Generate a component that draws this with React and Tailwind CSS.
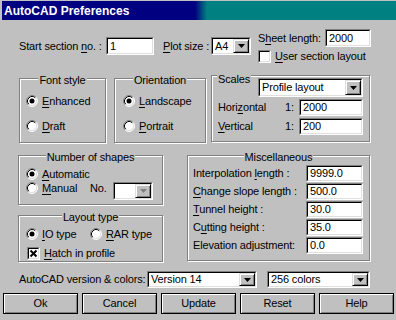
import React from "react";

const FONT = "font-['Liberation_Sans',Arial,sans-serif]";

// underlined mnemonic letter
function U({ children }) {
  return <span className="underline underline-offset-[2px]">{children}</span>;
}

function Sunken({ className = "", children }) {
  return (
    <div className={"flex border border-t-[#808080] border-l-[#808080] border-r-white border-b-white " + className}>
      <div className="flex flex-1 items-stretch border border-t-black border-l-black border-r-[#dfdfdf] border-b-[#dfdfdf] bg-white">
        {children}
      </div>
    </div>
  );
}

function Arrow({ disabled }) {
  return (
    <div className="flex w-[16px] items-center justify-center border border-t-[#dfdfdf] border-l-[#dfdfdf] border-r-black border-b-black bg-[#c0c0c0] shadow-[inset_1px_1px_0_#fff,inset_-1px_-1px_0_#808080]">
      <svg width="7" height="4" viewBox="0 0 7 4">
        <path d="M0 0H7L3.5 4Z" fill={disabled ? "#808080" : "#000"} />
      </svg>
    </div>
  );
}

function Field({ className, value }) {
  return (
    <Sunken className={className}>
      <span className="flex items-center pl-[2px] leading-none">{value}</span>
    </Sunken>
  );
}

function Combo({ className, value, disabled }) {
  return (
    <Sunken className={className}>
      <span className="flex flex-1 items-center pl-[2px] leading-none">{value}</span>
      <Arrow disabled={disabled} />
    </Sunken>
  );
}

function Radio({ checked }) {
  return (
    <svg width="12" height="12" viewBox="0 0 12 12" className="shrink-0">
      <circle cx="6" cy="6" r="5" fill="#fff" />
      <path d="M9.89 2.11A5.5 5.5 0 0 0 2.11 9.89" stroke="#808080" fill="none" />
      <path d="M2.11 9.89A5.5 5.5 0 0 0 9.89 2.11" stroke="#fff" fill="none" />
      <path d="M9.18 2.82A4.5 4.5 0 0 0 2.82 9.18" stroke="#000" fill="none" />
      <path d="M2.82 9.18A4.5 4.5 0 0 0 9.18 2.82" stroke="#dfdfdf" fill="none" />
      {checked && <circle cx="6" cy="6" r="2.5" fill="#000" />}
    </svg>
  );
}

function Check({ checked }) {
  return (
    <Sunken className="h-[13px] w-[13px] shrink-0">
      {checked && (
        <svg width="9" height="9" viewBox="0 0 9 9" className="m-auto">
          <path d="M1.5 1.5L7.5 7.5M7.5 1.5L1.5 7.5" stroke="#000" strokeWidth="2" />
        </svg>
      )}
    </Sunken>
  );
}

function Option({ checked, children, className = "" }) {
  return (
    <div className={"flex h-[14px] items-center gap-[4px] " + className}>
      <Radio checked={checked} />
      <span className="leading-none">{children}</span>
    </div>
  );
}

function Group({ title, className, children }) {
  return (
    <div className={"flex flex-col border border-[#808080] shadow-[inset_1px_1px_0_#fff,1px_1px_0_#fff] " + className}>
      <div className="flex justify-center">
        <span className="-mt-[5px] bg-[#c0c0c0] px-[1px] leading-[13px]">{title}</span>
      </div>
      {children}
    </div>
  );
}

function Button({ children }) {
  return (
    <div className="flex h-[21px] w-[75px] items-center justify-center border border-black bg-[#c0c0c0] shadow-[inset_1px_1px_0_#fff,inset_-1px_-1px_0_#808080]">
      {children}
    </div>
  );
}

const MISC = [
  [<>Interpolation <U>l</U>ength :</>, "9999.0"],
  [<><U>C</U>hange slope length :</>, "500.0"],
  [<><U>T</U>unnel height :</>, "30.0"],
  [<>C<U>u</U>tting height :</>, "35.0"],
  ["Elevation adjustment:", "0.0"],
];

export default function App() {
  return (
    <div className={"flex h-[320px] w-[396px] flex-col overflow-hidden whitespace-nowrap bg-[#c0c0c0] text-[11px] tracking-[-0.15px] text-black " + FONT}>
      {/* title bar */}
      <div className="ml-[2px] mt-[1px] flex h-[19px] items-center bg-[linear-gradient(to_right,#000080_49%,#008080_52%)] pl-[2px] text-[12px] font-bold tracking-normal text-white">
        AutoCAD Preferences
      </div>

      {/* top row */}
      <div className="mt-[9px] flex h-[34px] items-start">
        <div className="ml-[19px] mt-[8px] flex h-[18px] items-center">
          <span className="w-[87px]">Start section <U>n</U>o. :</span>
          <Field className="h-[18px] w-[48px]" value="1" />
          <span className="ml-[9px] w-[48px]"><U>P</U>lot size :</span>
          <Combo className="h-[18px] w-[40px]" value="A4" />
        </div>
        <div className="ml-[7px] flex flex-col">
          <div className="flex h-[18px] items-center">
            <span className="w-[67px]">S<U>h</U>eet length:</span>
            <Field className="h-[18px] w-[46px]" value="2000" />
          </div>
          <div className="mt-[2px] flex h-[14px] items-center gap-[4px]">
            <Check />
            <span><U>U</U>ser section layout</span>
          </div>
        </div>
      </div>

      {/* font style / orientation / scales */}
      <div className="mt-[12px] flex h-[67px] items-start">
        <Group title="Font style" className="ml-[19px] mt-[3px] h-[65px] w-[87px]">
          <Option checked className="ml-[6px] mt-[7px]"><U>E</U>nhanced</Option>
          <Option className="ml-[6px] mt-[11px]"><U>D</U>raft</Option>
        </Group>
        <Group title="Orientation" className="ml-[8px] mt-[3px] h-[65px] w-[92px]">
          <Option checked className="ml-[8px] mt-[7px]"><U>L</U>andscape</Option>
          <Option className="ml-[8px] mt-[11px]"><U>P</U>ortrait</Option>
        </Group>
        <div className="ml-[5px] flex h-[67px] w-[159px] flex-col border border-[#808080] shadow-[inset_1px_1px_0_#fff,1px_1px_0_#fff]">
          <div className="flex items-start">
            <span className="-mt-[3px] ml-[5px] bg-[#c0c0c0] px-[1px] leading-[13px]">Scales</span>
            <Combo className="ml-auto mr-[6px] mt-[2px] h-[19px] w-[105px]" value="Profile layout" />
          </div>
          <div className="mt-[2px] flex h-[17px] items-center pl-[6px]">
            <span className="w-[67px]">Hori<U>z</U>ontal</span>
            <span className="w-[14px]">1:</span>
            <Field className="h-[17px] w-[64px]" value="2000" />
          </div>
          <div className="mt-[2px] flex h-[17px] items-center pl-[6px]">
            <span className="w-[67px]"><U>V</U>ertical</span>
            <span className="w-[14px]">1:</span>
            <Field className="h-[17px] w-[64px]" value="200" />
          </div>
        </div>
      </div>

      {/* shapes / layout / misc */}
      <div className="mt-[13px] flex items-start">
        <div className="ml-[18px] flex w-[145px] flex-col">
          <Group title="Number of shapes" className="h-[50px]">
            <Option checked className="ml-[7px] mt-[3px]"><U>A</U>utomatic</Option>
            <div className="flex items-start">
              <Option className="ml-[7px] w-[64px]"><U>M</U>anual</Option>
              <span className="flex h-[14px] w-[23px] items-center">No.</span>
              <Combo className="mt-[1px] h-[18px] w-[40px]" value="" disabled />
            </div>
          </Group>
          <Group title="Layout type" className="mt-[10px] h-[47px]">
            <div className="mt-[3px] flex">
              <Option checked className="ml-[7px] w-[64px]"><U>I</U>O type</Option>
              <Option><U>R</U>AR type</Option>
            </div>
            <div className="ml-[8px] mt-[5px] flex h-[14px] items-center gap-[4px]">
              <Check checked />
              <span><U>H</U>atch in profile</span>
            </div>
          </Group>
        </div>
        <Group title="Miscellaneous" className="ml-[24px] h-[106px] w-[183px]">
          <div className="mt-[1px] flex flex-col gap-[1px]">
            {MISC.map(([label, value], i) => (
              <div key={i} className="flex h-[17px] items-center pl-[5px]">
                <span className="w-[113px]">{label}</span>
                <Field className="h-[17px] w-[57px]" value={value} />
              </div>
            ))}
          </div>
        </Group>
      </div>

      {/* version row */}
      <div className="mt-[9px] flex h-[17px] items-center">
        <span className="ml-[19px] w-[128px]">AutoCAD version &amp; colors:</span>
        <Combo className="h-[17px] w-[110px]" value="Version 14" />
        <Combo className="ml-[10px] h-[17px] w-[103px]" value="256 colors" />
      </div>

      {/* buttons */}
      <div className="ml-[3px] mt-[5px] flex gap-[4px]">
        <Button>Ok</Button>
        <Button>Cancel</Button>
        <Button>Update</Button>
        <Button>Reset</Button>
        <Button>Help</Button>
      </div>
    </div>
  );
}
